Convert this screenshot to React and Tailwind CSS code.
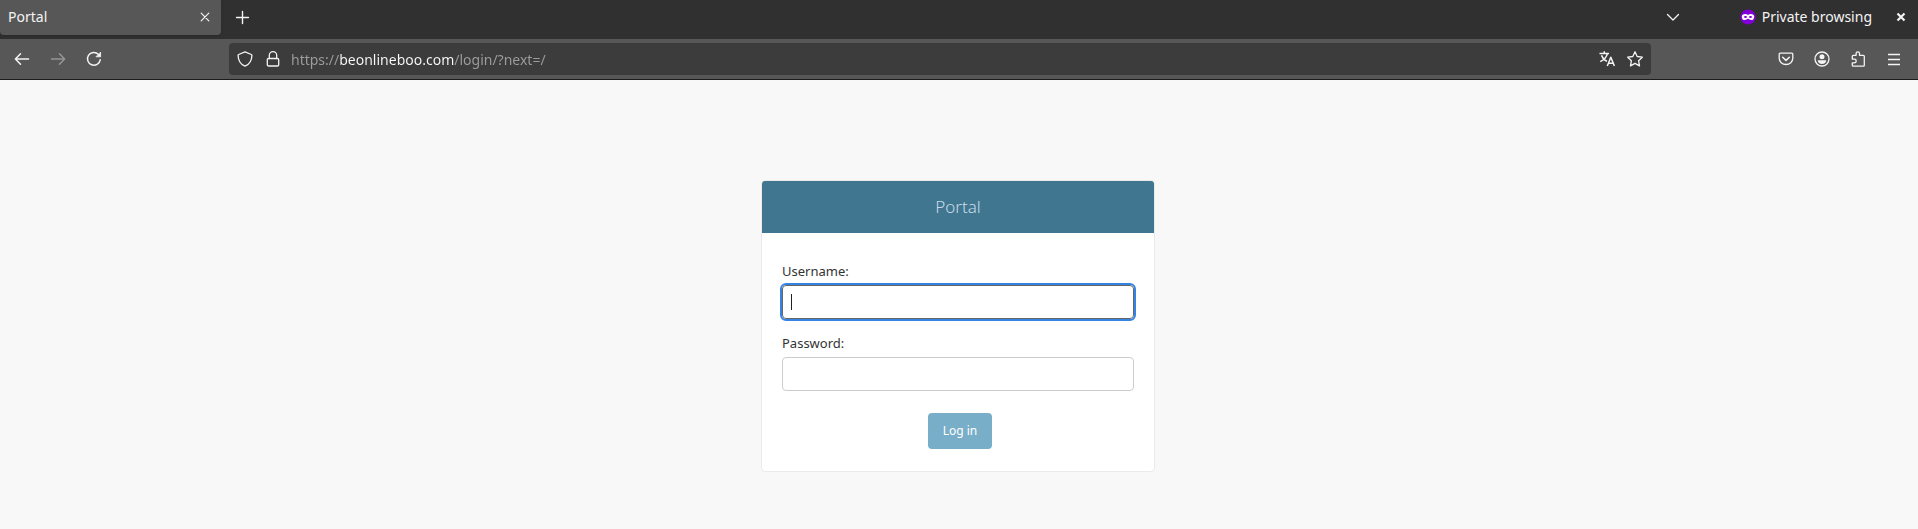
import React from "react";

function Icon({ children, className = "" }) {
  return (
    <svg
      viewBox="0 0 16 16"
      className={"size-4 shrink-0 " + className}
      fill="none"
      stroke="currentColor"
      strokeWidth="1.3"
      strokeLinecap="round"
      strokeLinejoin="round"
      aria-hidden="true"
    >
      {children}
    </svg>
  );
}

function IconButton({ label, className = "", children }) {
  return (
    <button
      type="button"
      aria-label={label}
      className={"flex h-8 shrink-0 items-center justify-center " + className}
    >
      <Icon>{children}</Icon>
    </button>
  );
}

function TabStrip() {
  return (
    <div className="flex h-[39px] items-start bg-[#303030] pr-[7px]">
      <div className="flex h-[35px] w-[221px] items-center justify-between rounded-b bg-[#575757] px-2 pb-px shadow">
        <span>Portal</span>
        <button type="button" aria-label="Close tab" className="p-0">
          <Icon>
            <path d="M4.2 4.2l7.6 7.6M11.8 4.2l-7.6 7.6" strokeWidth="1.2" />
          </Icon>
        </button>
      </div>
      <div className="flex h-[34px] flex-1 items-center">
        <IconButton label="New tab" className="ml-[5px] w-8">
          <path d="M8.500 2.500v12M2.500 8.500h12" strokeWidth="1.400" />
        </IconButton>
        <IconButton label="List all tabs" className="ml-auto w-9">
          <path d="M2.500 5.500L8 11l5.500-5.500" />
        </IconButton>
        <div className="ml-[49px] flex items-center gap-1.5">
          <svg viewBox="0 0 16 16" className="size-4" aria-hidden="true">
            <circle cx="8" cy="8" r="7.600" fill="#8000d7" />
            <path
              fill="#fff"
              fillRule="evenodd"
              d="M8 6c.8-.7 1.700-1 2.800-1 2 0 3.400.8 3.400 2.700 0 2-1.200 3.400-2.900 3.400-1.500 0-2.300-1.300-3.300-1.300s-1.800 1.300-3.300 1.300c-1.700 0-2.900-1.400-2.900-3.400C1.800 5.800 3.200 5 5.200 5 6.300 5 7.200 5.300 8 6zM3.700 8.100c.5.700 1.100 1 1.800 1s1.300-.4 1.700-1c-.4-.7-1-1.200-1.700-1.200s-1.400.5-1.800 1.200zM8.800 8.100c.4.600 1 1 1.700 1s1.300-.3 1.800-1c-.4-.7-1.100-1.200-1.800-1.200s-1.300.5-1.700 1.200z"
            />
          </svg>
          <span>Private browsing</span>
        </div>
        <IconButton label="Close window" className="ml-[19px] w-5">
          <path d="M4.500 4.500l7 7M11.500 4.500l-7 7" strokeWidth="2.200" strokeLinecap="butt" />
        </IconButton>
      </div>
    </div>
  );
}

function AddressBar() {
  return (
    <div className="ml-[117px] flex h-8 min-w-0 flex-1 items-center rounded bg-[#3c3c3c] px-0.5">
      <IconButton label="Tracking protection" className="w-7">
        <path d="M8 .9L14.300 3.500c.5.200.6.500.6.900C14.800 9 12.500 13.200 8 15.200 3.500 13.200 1.200 9 1.100 4.400c0-.4.1-.7.6-.9z" />
      </IconButton>
      <IconButton label="Site information" className="w-7">
        <rect x="2.300" y="7.500" width="11.400" height="7.500" rx="1.300" />
        <path d="M4.300 7.500V4.400a3.700 3.700 0 0 1 7.400 0v3.100" />
      </IconButton>
      <input
        type="text"
        aria-label="Address"
        defaultValue="https://beonlineboo.com/login/?next=/"
        className="ml-1 h-7 min-w-0 flex-1 bg-[linear-gradient(90deg,#9d9d9d_48px,#fbfbfb_48px,#fbfbfb_163px,#9d9d9d_163px)] bg-clip-text text-transparent outline-none"
      />
      <IconButton label="Translate page" className="w-7">
        <path
          d="M.5 2.500h9.500M5.300 .3v2.200M8.400 2.700C7.600 6.200 5 8.900 1.300 10.700M2.500 4.200C3.600 7.200 5.600 9.300 8 10.300M8.300 15l3.500-8.700L15.400 15M9.500 12.300h4.600"
          strokeLinecap="butt"
          strokeWidth="1.500"
        />
      </IconButton>
      <IconButton label="Bookmark this page" className="w-7">
        <path d="M8 .8l2.200 4.700 5.100.7-3.700 3.500.9 5.200L8 12.400l-4.500 2.500.9-5.200L.7 6.200l5.100-.7z" />
      </IconButton>
    </div>
  );
}

function Toolbar() {
  return (
    <div className="flex h-10 items-center bg-[#575757] pr-1.5 pl-1">
      <IconButton label="Back" className="w-9">
        <path d="M14.500 8h-13M6.500 2.800L1.400 8l5.100 5.200" strokeWidth="1.500" />
      </IconButton>
      <IconButton label="Forward" className="w-9 text-[#959595]">
        <path d="M1.500 8h13M9.500 2.800L14.600 8l-5.100 5.200" strokeWidth="1.500" />
      </IconButton>
      <IconButton label="Reload" className="w-9">
        <path d="M14.200 8.800A6.400 6.400 0 1 1 12.300 3.200" strokeWidth="1.500" />
        <path d="M14.600 1.500v4.300h-4.300z" fill="currentColor" strokeWidth="0.800" />
      </IconButton>
      <AddressBar />
      <div className="ml-[117px] flex">
        <IconButton label="Save to Pocket" className="w-9">
          <path d="M2.200 2.200h11.600c.6 0 1 .4 1 1v4a6.800 6.300 0 0 1-13.600 0v-4c0-.6.4-1 1-1z" />
          <path d="M4.700 6.300L8 9.400l3.300-3.100" strokeWidth="1.500" />
        </IconButton>
        <IconButton label="Account" className="w-9">
          <circle cx="8" cy="8" r="7" />
          <circle cx="8" cy="5.700" r="2.500" fill="currentColor" stroke="none" />
          <path d="M3.700 9.300h8.600c0 2.200-1.900 3.700-4.300 3.700s-4.300-1.500-4.300-3.700z" fill="currentColor" stroke="none" />
        </IconButton>
        <IconButton label="Extensions" className="w-9">
          <path d="M2.300 7.300V5.200c0-.6.3-.9.900-.9h2.900V2.500a1.700 1.700 0 0 1 3.400 0v1.800h3.900c.6 0 .9.300.9.900v9c0 .6-.3.900-.9.900H3.200c-.6 0-.9-.3-.9-.9v-2.400h2.100a1.500 1.500 0 0 0 0-3.600H2.300z" />
        </IconButton>
        <IconButton label="Open menu" className="w-9">
          <path d="M2 3.500h12M2 8.500h12M2 13.500h12" strokeWidth="1.300" strokeLinecap="butt" />
        </IconButton>
      </div>
    </div>
  );
}

function LoginCard() {
  return (
    <div className="w-[394px] overflow-hidden rounded border border-[#eaeaea] bg-white text-[13px] text-[#333333]">
      <h1 className="flex h-[52px] items-center justify-center bg-[#417690] text-[17px] font-light text-[#c4dce8]">
        Portal
      </h1>
      <form className="px-5 pt-7 pb-[22px]" onSubmit={(e) => e.preventDefault()}>
        <label htmlFor="username" className="block h-6 leading-5">
          Username:
        </label>
        <div className="relative">
          <input
            id="username"
            type="text"
            autoComplete="off"
            className="block h-[34px] w-full rounded border border-[#666666] px-2 outline-2 outline-[#3584e4]"
          />
          <span className="pointer-events-none absolute top-[9px] left-[9px] h-4 w-px bg-[#222222]" />
        </div>
        <label htmlFor="password" className="mt-3.5 block h-6 leading-5">
          Password:
        </label>
        <input
          id="password"
          type="password"
          className="block h-[34px] w-full rounded border border-[#cccccc] px-2 outline-none"
        />
        <div className="mt-[22px] flex justify-center">
          <button
            type="submit"
            className="ml-1 h-9 rounded bg-[#79aec8] px-[15px] text-xs leading-5 text-white"
          >
            Log in
          </button>
        </div>
      </form>
    </div>
  );
}

export default function App() {
  return (
    <div className="flex min-h-screen flex-col bg-[#f8f8f8] font-['Noto_Sans',sans-serif]">
      <header className="border-b border-[#1c1c1c] text-sm leading-5 text-[#f4f4f4]">
        <TabStrip />
        <Toolbar />
      </header>
      <main className="flex flex-1 justify-center pt-25 pr-0.5 pb-10">
        <div>
          <LoginCard />
        </div>
      </main>
    </div>
  );
}
